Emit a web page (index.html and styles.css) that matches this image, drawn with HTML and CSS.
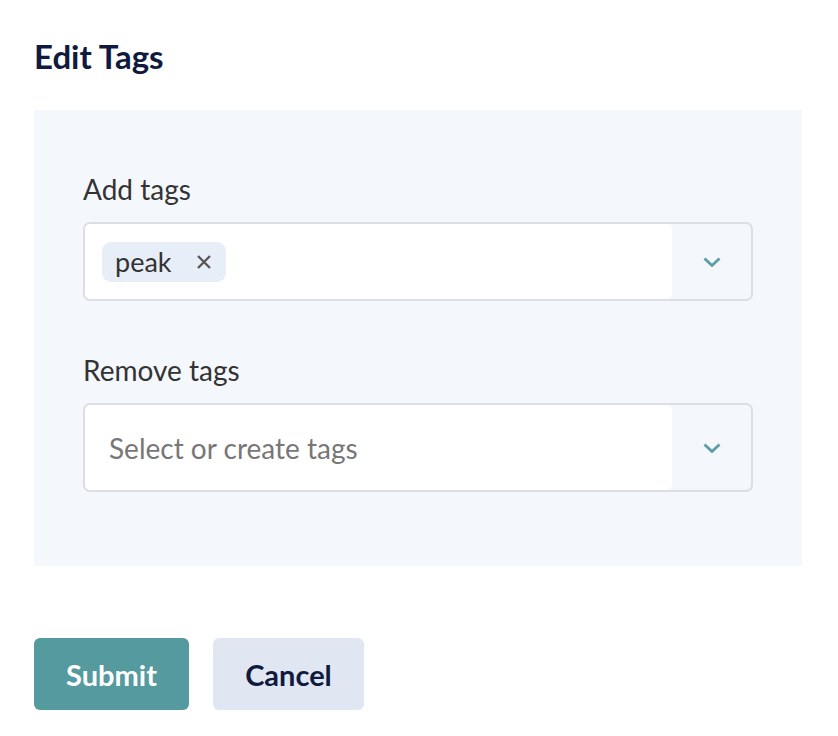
FILE: index.html
```html
<!DOCTYPE html>
<html>
<head>
<meta charset="utf-8">
<link rel="stylesheet" href="styles.css">
</head>
<body>
<div class="page">
  <h1 class="title">Edit Tags</h1>
  <div class="panel">
    <div class="field">
      <label class="label">Add tags</label>
      <div class="select select-short">
        <div class="select-main">
          <span class="chip">peak<svg class="chip-x" width="16" height="16" viewBox="0 0 16 16"><path d="M2 2 L14 14 M14 2 L2 14" fill="none" stroke="#575757" stroke-width="2.4"/></svg></span>
        </div>
        <div class="select-toggle">
          <svg width="18" height="10" viewBox="0 0 18 10"><path d="M1.5 1.5 L9 8.5 L16.5 1.5" fill="none" stroke="#5a9ea6" stroke-width="2.8"/></svg>
        </div>
      </div>
    </div>
    <div class="field">
      <label class="label">Remove tags</label>
      <div class="select select-tall">
        <div class="select-main">
          <span class="placeholder">Select or create tags</span>
        </div>
        <div class="select-toggle">
          <svg width="18" height="10" viewBox="0 0 18 10"><path d="M1.5 1.5 L9 8.5 L16.5 1.5" fill="none" stroke="#5a9ea6" stroke-width="2.8"/></svg>
        </div>
      </div>
    </div>
  </div>
  <div class="actions">
    <button class="btn btn-primary">Submit</button>
    <button class="btn btn-secondary">Cancel</button>
  </div>
</div>
</body>
</html>
```

FILE: styles.css
```css
html, body {
  margin: 0;
  padding: 0;
  background: #ffffff;
  font-family: Lato, "Open Sans", sans-serif;
}
.page {
  padding: 36px 36px 0 34px;
}
.title {
  margin: 0;
  font-size: 33px;
  font-weight: 700;
  color: #101a3e;
  line-height: 40px;
}
.panel {
  margin-top: 34px;
  background: #f4f7fc;
  padding: 62px 49px 74px 49px;
  display: flex;
  flex-direction: column;
  gap: 52px;
}
.field {
  display: flex;
  flex-direction: column;
}
.label {
  font-size: 28px;
  color: #333333;
  line-height: 34px;
  margin-bottom: 16px;
}
.select {
  display: flex;
  border: 2px solid #dcdee2;
  border-radius: 7px;
  background: #f4f7fc;
  overflow: hidden;
}
.select-short { height: 75px; }
.select-tall { height: 85px; }
.select-main {
  flex: 1;
  background: #ffffff;
  border-radius: 0 6px 6px 0;
  display: flex;
  align-items: center;
  padding-left: 17px;
}
.select-tall .select-main { padding-left: 24px; }
.select-toggle {
  width: 79px;
  display: flex;
  align-items: center;
  justify-content: center;
}
.chip {
  display: inline-flex;
  align-items: center;
  height: 40px;
  background: #e8eef8;
  border-radius: 9px;
  padding: 0 14px 0 13px;
  font-size: 27px;
  color: #333333;
}
.chip-x {
  margin-left: 24px;
}
.placeholder {
  font-size: 28px;
  color: #777777;
}
.actions {
  margin-top: 72px;
  display: flex;
  gap: 24px;
}
.btn {
  height: 72px;
  border: none;
  border-radius: 6px;
  font-family: Lato, "Open Sans", sans-serif;
  font-size: 29px;
  font-weight: 700;
  padding: 0;
}
.btn-primary {
  width: 155px;
  background: #559a9f;
  color: #ffffff;
}
.btn-secondary {
  width: 151px;
  background: #e1e6f3;
  color: #101a3e;
}
```
